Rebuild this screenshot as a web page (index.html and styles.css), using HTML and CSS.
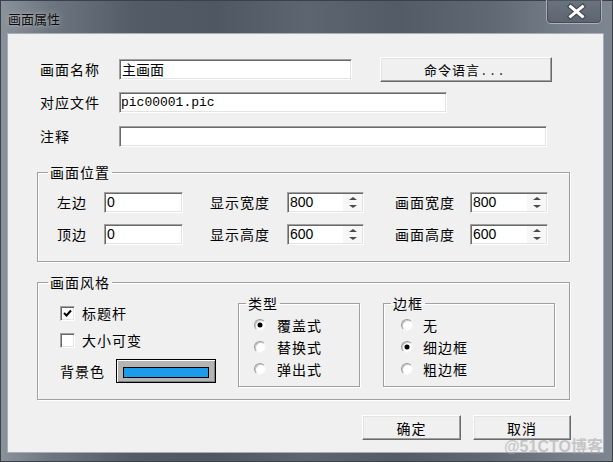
FILE: index.html
```html
<!DOCTYPE html>
<html>
<head>
<meta charset="utf-8">
<link rel="stylesheet" href="styles.css">
</head>
<body>
<div class="window">
  <div class="titlebar">
    <span class="title">画面属性</span>
    <div class="close">
      <svg width="56" height="24" viewBox="0 0 56 24">
        <path d="M24.5 7.5 L36.5 17.5 M36.5 7.5 L24.5 17.5" stroke="#3a4047" stroke-width="5" stroke-linecap="square" fill="none"/>
        <path d="M24.5 7.5 L36.5 17.5 M36.5 7.5 L24.5 17.5" stroke="#ffffff" stroke-width="3" stroke-linecap="square" fill="none"/>
      </svg>
    </div>
  </div>
  <div class="client">
    <div class="row r1">
      <span class="lbl">画面名称</span>
      <div class="field f-name"><span class="val">主画面</span></div>
      <div class="btn btn-cmd">命令语言<span class="dots">...</span></div>
    </div>
    <div class="row r2">
      <span class="lbl">对应文件</span>
      <div class="field f-file"><span class="val mono">pic00001.pic</span></div>
    </div>
    <div class="row r3">
      <span class="lbl">注释</span>
      <div class="field f-note"></div>
    </div>

    <fieldset class="group g1">
      <legend>画面位置</legend>
      <div class="pos-grid">
        <span class="c-lbl">左边</span>
        <div class="field num">0</div>
        <span class="c-lbl pad27">显示宽度</span>
        <div class="field num spin">800<span class="arrows"><i class="up"></i><i class="down"></i></span></div>
        <span class="c-lbl pad31">画面宽度</span>
        <div class="field num spin">800<span class="arrows"><i class="up"></i><i class="down"></i></span></div>

        <span class="c-lbl">顶边</span>
        <div class="field num">0</div>
        <span class="c-lbl pad27">显示高度</span>
        <div class="field num spin">600<span class="arrows"><i class="up"></i><i class="down"></i></span></div>
        <span class="c-lbl pad31">画面高度</span>
        <div class="field num spin">600<span class="arrows"><i class="up"></i><i class="down"></i></span></div>
      </div>
    </fieldset>

    <fieldset class="group g2">
      <legend>画面风格</legend>
      <div class="style-body">
        <div class="style-left">
          <div class="check c1">
            <span class="cbox">
              <svg width="13" height="13" viewBox="0 0 13 13"><path d="M3 6 L5.5 8.5 L10 3.5" stroke="#000" stroke-width="2" fill="none"/></svg>
            </span>
            <span>标题杆</span>
          </div>
          <div class="check c2">
            <span class="cbox"></span>
            <span>大小可变</span>
          </div>
          <div class="bg-row">
            <span>背景色</span>
            <div class="colorbtn"><div class="swatch"></div></div>
          </div>
        </div>
        <fieldset class="sub sub-type">
          <legend>类型</legend>
          <div class="radio-row"><span class="radio on"></span><span>覆盖式</span></div>
          <div class="radio-row"><span class="radio"></span><span>替换式</span></div>
          <div class="radio-row"><span class="radio"></span><span>弹出式</span></div>
        </fieldset>
        <fieldset class="sub sub-border">
          <legend>边框</legend>
          <div class="radio-row"><span class="radio"></span><span>无</span></div>
          <div class="radio-row"><span class="radio on"></span><span>细边框</span></div>
          <div class="radio-row"><span class="radio"></span><span>粗边框</span></div>
        </fieldset>
      </div>
    </fieldset>

    <div class="actions">
      <div class="btn btn-ok">确定</div>
      <div class="btn btn-cancel">取消</div>
    </div>
  </div>
  <div class="watermark">@51CTO博客</div>
</div>
</body>
</html>
```

FILE: styles.css
```css
* { box-sizing: border-box; }
html, body { margin: 0; padding: 0; }
body {
  width: 613px;
  height: 462px;
  overflow: hidden;
  font-family: "Noto Sans CJK SC", "Liberation Sans", sans-serif;
  font-size: 14px;
  color: #000;
}
.window {
  position: relative;
  width: 613px;
  height: 462px;
  display: flex;
  flex-direction: column;
  background: linear-gradient(to right, #8a929b 0%, #6e7781 8%, #535c66 22%, #4e5762 35%, #5d6670 50%, #525b66 65%, #5f6873 80%, #747d88 92%, #7e8791 100%);
  box-shadow: inset 0 0 0 1px #3a4149;
}
.titlebar {
  height: 33px;
  display: flex;
  justify-content: space-between;
  align-items: flex-start;
  padding-left: 8px;
  flex: none;
}
.title {
  margin-top: 11px;
  font-size: 13px;
  line-height: 16px;
  color: #0c0c0c;
  text-shadow: 0 0 6px rgba(255,255,255,0.45), 0 0 2px rgba(255,255,255,0.3);
}
.close {
  width: 56px;
  height: 24px;
  margin-right: 11px;
  border: 1px solid rgba(255,255,255,0.45);
  border-top: none;
  border-radius: 0 0 5px 5px;
  background: linear-gradient(to bottom, #6b747e, #5c656f);
  box-shadow: inset 0 0 0 1px rgba(0,0,0,0.25);
}
.close svg { display: block; margin: -1px 0 0 -1px; }

.client {
  margin: 0 9px 9px 7px;
  height: 420px;
  background: #f0f0f0;
  border: 1px solid #a7aeb6;
  flex: none;
}

.row {
  display: flex;
  align-items: center;
  margin-left: 32px;
}
.r1 { margin-top: 23px; height: 25px; }
.r2 { margin-top: 10px; height: 21px; }
.r3 { margin-top: 13px; height: 21px; }
.lbl {
  width: 79px;
  letter-spacing: 1px;
  line-height: 21px;
}

.field {
  height: 21px;
  background: #fff;
  border: 1px solid;
  border-color: #a0a0a0 #ffffff #ffffff #a0a0a0;
  box-shadow: inset 1px 1px 0 #696969, inset -1px -1px 0 #e3e3e3;
  display: flex;
  align-items: center;
}
.f-name { width: 233px; }
.f-file { width: 328px; }
.f-note { width: 428px; }
.val {
  padding-left: 2px;
  line-height: 19px;
}
.mono {
  font-family: "Liberation Mono", monospace;
  font-size: 13px;
  padding-left: 1px;
}

.btn {
  display: flex;
  align-items: center;
  justify-content: center;
  height: 25px;
  background: #f0f0f0;
  border: 1px solid;
  border-color: #ffffff #696969 #696969 #ffffff;
  box-shadow: inset -1px -1px 0 #a0a0a0, inset 1px 1px 0 #e3e3e3;
  letter-spacing: 1px;
  line-height: 20px;
}
.btn-cmd {
  width: 172px;
  margin-left: 28px;
  font-size: 13px;
}
.dots { letter-spacing: 5px; margin-left: 2px; }

.group {
  margin: 0 0 0 29px;
  width: 533px;
  border: 1px solid #a0a0a0;
  box-shadow: inset 1px 1px 0 #ffffff, 1px 1px 0 #ffffff;
  padding: 0;
  min-width: 0;
}
legend {
  padding: 0 2px;
  margin-left: 10px;
  line-height: 18px;
  letter-spacing: 1px;
}
.g1 {
  margin-top: 16px;
  padding-top: 11px;
  padding-bottom: 16px;
}
.pos-grid {
  margin-left: 19px;
  display: grid;
  grid-template-columns: 47px 79px 104px 77px 106px 78px;
  grid-auto-rows: 21px;
  row-gap: 11px;
  align-items: center;
}
.c-lbl { letter-spacing: 1px; line-height: 21px; }
.pad27 { padding-left: 27px; }
.pad31 { padding-left: 31px; }
.num {
  font-family: "Liberation Sans", sans-serif;
  font-size: 14px;
  padding-left: 2px;
  line-height: 19px;
}
.arrows {
  margin-left: auto;
  width: 19px;
  height: 17px;
  margin-right: 1px;
  background: #f7f7f7;
  display: flex;
  flex-direction: column;
  align-items: center;
  justify-content: center;
  gap: 5px;
}
.arrows i {
  display: block;
  width: 0;
  height: 0;
  border-left: 4px solid transparent;
  border-right: 4px solid transparent;
}
.arrows .up { border-bottom: 3px solid #4a4a4a; }
.arrows .down { border-top: 3px solid #4a4a4a; }

.g2 {
  margin-top: 11px;
  padding-top: 3px;
  padding-bottom: 12px;
}
.style-body {
  display: flex;
  align-items: flex-start;
}
.style-left {
  width: 178px;
  margin-left: 22px;
  flex: none;
}
.check {
  display: flex;
  align-items: center;
  height: 20px;
  letter-spacing: 1px;
}
.c1 { margin-top: 9px; }
.c2 { margin-top: 7px; }
.cbox {
  width: 15px;
  height: 15px;
  margin-right: 7px;
  background: #fff;
  border: 1px solid;
  border-color: #a0a0a0 #ffffff #ffffff #a0a0a0;
  box-shadow: inset 1px 1px 0 #696969, inset -1px -1px 0 #e3e3e3;
  display: flex;
  align-items: center;
  justify-content: center;
}
.cbox svg { display: block; }
.bg-row {
  display: flex;
  align-items: center;
  margin-top: 9px;
  letter-spacing: 1px;
}
.colorbtn {
  margin-left: 11px;
  width: 100px;
  height: 24px;
  border: 1px solid #000;
  background: #b4b4b4;
  box-shadow: inset 1px 1px 0 #ffffff, inset -1px -1px 0 #808080;
  padding: 7px 6px 0 6px;
}
.swatch {
  height: 11px;
  background: #1b9bea;
  border: 1px solid #000;
}

.sub {
  margin: 0;
  border: 1px solid #a0a0a0;
  box-shadow: inset 1px 1px 0 #ffffff, 1px 1px 0 #ffffff;
  padding: 3px 0 6px 0;
  min-width: 0;
  height: 93px;
  flex: none;
}
.sub-type { width: 122px; padding-left: 15px; }
.sub-type legend { margin-left: -8px; }
.sub-border { width: 172px; margin-left: 23px; padding-left: 17px; }
.sub-border legend { margin-left: -10px; }
.radio-row {
  display: flex;
  align-items: center;
  height: 20px;
  letter-spacing: 1px;
}
.radio-row + .radio-row { margin-top: 2px; }
.sub-type .radio { margin-right: 11px; }
.sub-border .radio { margin-right: 10px; }
.radio {
  width: 12px;
  height: 12px;
  border-radius: 50%;
  border: 1px solid;
  border-color: #9a9a9a #f4f4f4 #f4f4f4 #9a9a9a;
  background: #fff;
  box-shadow: inset 1px 1px 0 #c8c8c8;
  display: flex;
  align-items: center;
  justify-content: center;
  flex: none;
}
.radio.on::after {
  content: "";
  width: 4px;
  height: 4px;
  border-radius: 50%;
  background: #000;
  box-shadow: 0 0 0 0.5px #000;
}

.actions {
  display: flex;
  justify-content: flex-end;
  gap: 12px;
  margin-top: 15px;
  padding-right: 32px;
}
.btn-ok { width: 99px; }
.btn-cancel { width: 98px; }

.watermark {
  position: absolute;
  left: 504px;
  top: 437px;
  font-size: 16px;
  line-height: 20px;
  font-family: "Liberation Sans", "Noto Sans CJK SC", sans-serif;
  color: rgba(160,160,160,0.55);
  font-weight: bold;
}
```
